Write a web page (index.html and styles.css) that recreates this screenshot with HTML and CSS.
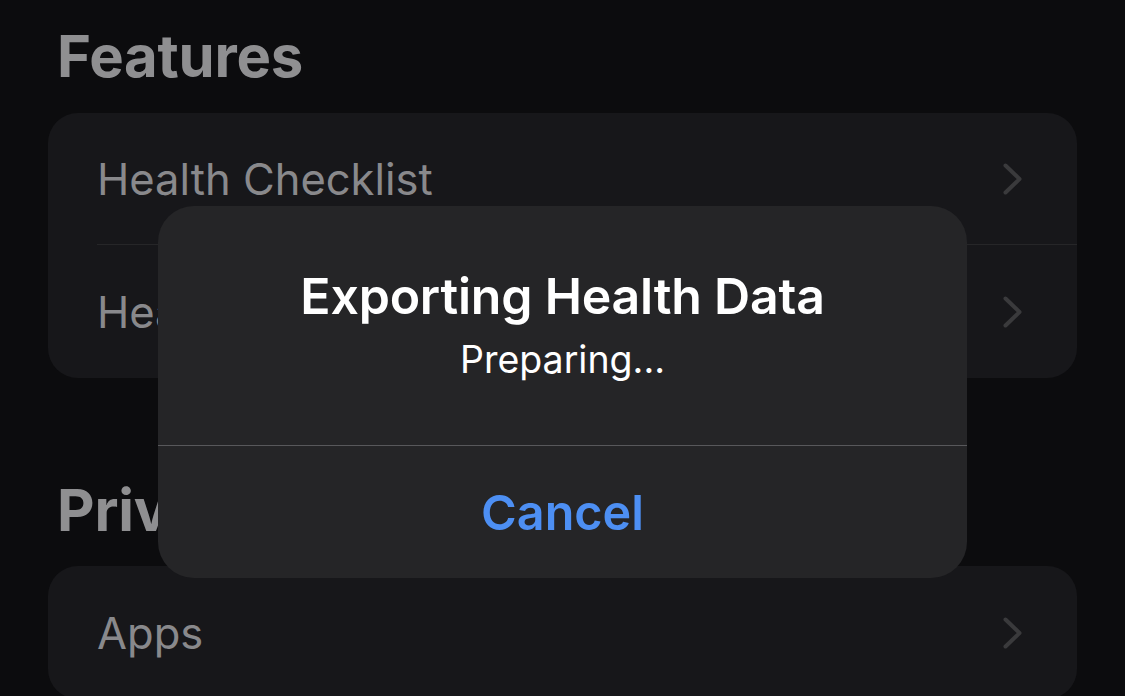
FILE: index.html
```html
<!DOCTYPE html>
<html lang="en">
<head>
<meta charset="utf-8">
<title>Health Data Export</title>
<link rel="stylesheet" href="styles.css">
</head>
<body>
<div class="page">
  <section class="section first">
    <h2 class="heading">Features</h2>
    <div class="card">
      <div class="row">
        <span class="row-label">Health Checklist</span>
        <svg class="chev" width="19" height="32" viewBox="0 0 19 32"><polyline points="2.5,2.5 16.5,16 2.5,29.5" fill="none" stroke="#3a3a3c" stroke-width="4" stroke-linecap="round" stroke-linejoin="round"/></svg>
      </div>
      <div class="row">
        <span class="row-label">Health Records</span>
        <svg class="chev" width="19" height="32" viewBox="0 0 19 32"><polyline points="2.5,2.5 16.5,16 2.5,29.5" fill="none" stroke="#3a3a3c" stroke-width="4" stroke-linecap="round" stroke-linejoin="round"/></svg>
      </div>
    </div>
  </section>
  <section class="section second">
    <h2 class="heading">Privacy</h2>
    <div class="card">
      <div class="row">
        <span class="row-label">Apps</span>
        <svg class="chev" width="19" height="32" viewBox="0 0 19 32"><polyline points="2.5,2.5 16.5,16 2.5,29.5" fill="none" stroke="#3a3a3c" stroke-width="4" stroke-linecap="round" stroke-linejoin="round"/></svg>
      </div>
    </div>
  </section>
</div>
<div class="alert">
  <div class="alert-body">
    <div class="alert-title">Exporting Health Data</div>
    <div class="alert-msg">Preparing...</div>
  </div>
  <div class="alert-action">Cancel</div>
</div>
</body>
</html>
```
FILE: styles.css
```css
html, body {
  margin: 0;
  padding: 0;
  background: #0c0c0e;
  width: 1125px;
  height: 696px;
  overflow: hidden;
  font-family: "Inter", "Noto Sans", sans-serif;
}
.page {
  padding: 0 48px;
}
.section.first .heading {
  margin-top: 21px;
}
.section.second .heading {
  margin-top: 97px;
}
.heading {
  margin: 0 0 22px 0;
  padding-left: 9px;
  font-size: 58px;
  line-height: 70px;
  font-weight: 700;
  color: #8f8f91;
  letter-spacing: -0.2px;
}
.section.second .heading {
  margin-bottom: 21px;
}
.card {
  background: #17171a;
  border-radius: 30px;
  padding-left: 49px;
}
.row {
  height: 131px;
  display: flex;
  align-items: center;
  justify-content: space-between;
  padding-right: 55px;
  border-bottom: 1px solid #262628;
}
.row:last-child {
  border-bottom: none;
  height: 133px;
}
.row-label {
  font-size: 43.5px;
  color: #89898c;
  font-weight: 400;
}
.alert {
  position: absolute;
  left: 158px;
  top: 206px;
  width: 809px;
  height: 372px;
  background: #252527;
  border-radius: 36px;
  display: flex;
  flex-direction: column;
  overflow: hidden;
}
.alert-body {
  height: 240px;
  display: flex;
  flex-direction: column;
  align-items: center;
  padding-top: 60px;
  box-sizing: border-box;
  border-bottom: 1px solid #58585b;
}
.alert-title {
  font-size: 50px;
  line-height: 60px;
  font-weight: 600;
  letter-spacing: -0.2px;
  color: #ffffff;
}
.alert-msg {
  margin-top: 12px;
  font-size: 37.5px;
  line-height: 44px;
  color: #ffffff;
}
.alert-action {
  flex: 1;
  display: flex;
  align-items: center;
  justify-content: center;
  font-size: 48.5px;
  font-weight: 600;
  color: #4d8ff3;
}
```
